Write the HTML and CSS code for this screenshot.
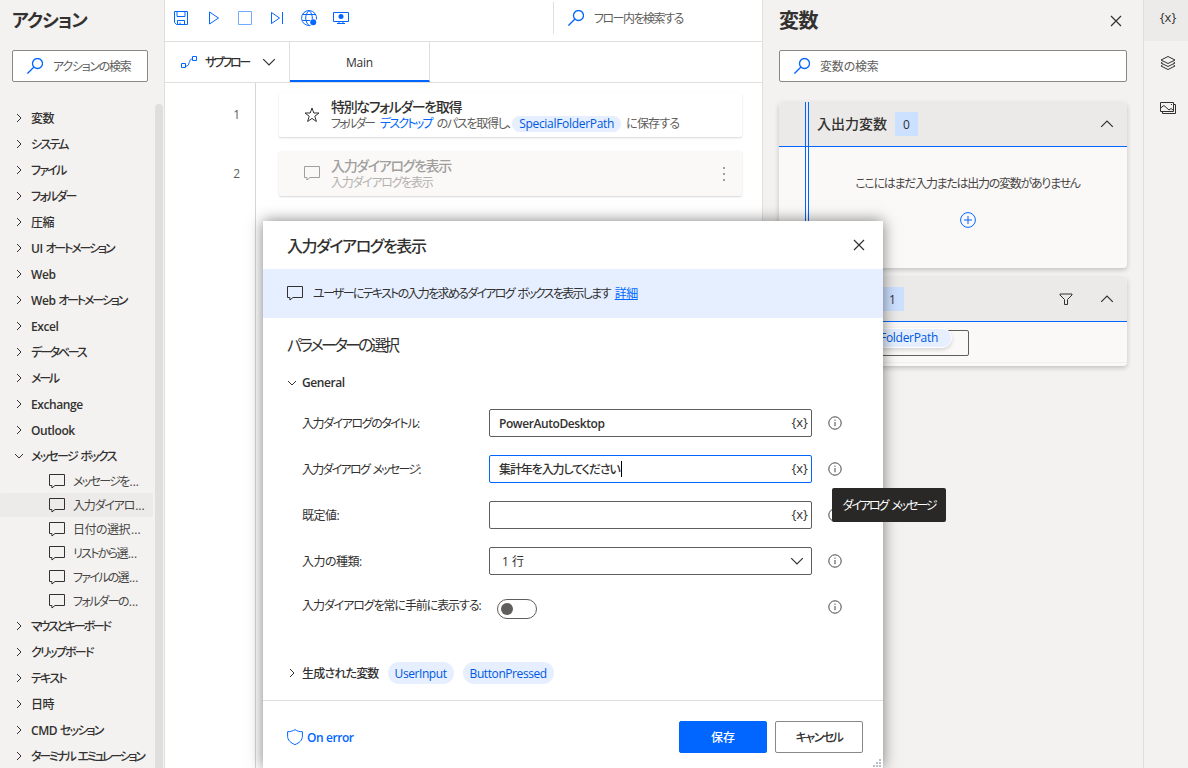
FILE: index.html
```html
<!DOCTYPE html>
<html lang="ja">
<head>
    <meta charset="UTF-8">
    <title>Power Automate Desktop</title>
    <link rel="stylesheet" href="styles.css">
</head>
<body>
    <svg class="defs">
        <symbol id="right" viewBox="0 0 8 10"><path d="M2 1l4 4-4 4"/></symbol>
        <symbol id="down" viewBox="0 0 10 8"><path d="M1 2l4 4 4-4"/></symbol>
        <symbol id="bigdown" viewBox="0 0 14 8"><path d="M1.2 1.2L7 7l5.8-5.8"/></symbol>
        <symbol id="bigup" viewBox="0 0 14 8"><path d="M1.2 6.8L7 1l5.8 5.8"/></symbol>
        <symbol id="search" viewBox="0 0 16 16"><circle cx="10.5" cy="5.5" r="5"/><path d="M7 9L.4 15.6"/></symbol>
        <symbol id="comment" viewBox="0 0 16 15"><path d="M.5.5h15v11H6L2.9 14v-2.500H.5z"/></symbol>
        <symbol id="close" viewBox="0 0 12 12"><path d="M1 1l10 10M11 1L1 11"/></symbol>
        <symbol id="info" viewBox="0 0 14 14"><circle cx="7" cy="7" r="6.2"/><path d="M7 6v4.200M7 3.600v1.200"/></symbol>
    </svg>

    <div class="app">
        <aside class="actions">
            <h2>アクション</h2>
            <div class="searchbox"><svg class="ic-search"><use href="#search"/></svg><span>アクションの検索</span></div>
            <div class="tree">
                <ul>
                    <li><svg class="arr"><use href="#right"/></svg><span class="kj">変数</span></li>
                    <li><svg class="arr"><use href="#right"/></svg><span>システム</span></li>
                    <li><svg class="arr"><use href="#right"/></svg><span>ファイル</span></li>
                    <li><svg class="arr"><use href="#right"/></svg><span>フォルダー</span></li>
                    <li><svg class="arr"><use href="#right"/></svg><span class="kj">圧縮</span></li>
                    <li><svg class="arr"><use href="#right"/></svg><span class="mix"><b class="en">UI </b>オートメーション</span></li>
                    <li><svg class="arr"><use href="#right"/></svg><span class="en">Web</span></li>
                    <li><svg class="arr"><use href="#right"/></svg><span class="mix"><b class="en">Web </b>オートメーション</span></li>
                    <li><svg class="arr"><use href="#right"/></svg><span class="en">Excel</span></li>
                    <li><svg class="arr"><use href="#right"/></svg><span class="tight">データベース</span></li>
                    <li><svg class="arr"><use href="#right"/></svg><span class="tight">メール</span></li>
                    <li><svg class="arr"><use href="#right"/></svg><span class="en">Exchange</span></li>
                    <li><svg class="arr"><use href="#right"/></svg><span class="en">Outlook</span></li>
                    <li><svg class="arr open"><use href="#down"/></svg><span>メッセージ ボックス</span></li>
                    <li class="sub"><svg class="cmt"><use href="#comment"/></svg><span>メッセージを<b>...</b></span></li>
                    <li class="sub on"><svg class="cmt"><use href="#comment"/></svg><span class="wide">入力ダイアロ<b>...</b></span></li>
                    <li class="sub"><svg class="cmt"><use href="#comment"/></svg><span class="kj">日付の選択<b>...</b></span></li>
                    <li class="sub"><svg class="cmt"><use href="#comment"/></svg><span>リストから選<b>...</b></span></li>
                    <li class="sub"><svg class="cmt"><use href="#comment"/></svg><span>ファイルの選<b>...</b></span></li>
                    <li class="sub"><svg class="cmt"><use href="#comment"/></svg><span>フォルダーの<b>...</b></span></li>
                    <li><svg class="arr"><use href="#right"/></svg><span class="tight">マウスとキーボード</span></li>
                    <li><svg class="arr"><use href="#right"/></svg><span>クリップボード</span></li>
                    <li><svg class="arr"><use href="#right"/></svg><span>テキスト</span></li>
                    <li><svg class="arr"><use href="#right"/></svg><span class="kj">日時</span></li>
                    <li><svg class="arr"><use href="#right"/></svg><span><b class="en">CMD </b>セッション</span></li>
                    <li><svg class="arr"><use href="#right"/></svg><span class="tight">ターミナル エミュレーション</span></li>
                </ul>
                <div class="scrollbar"></div>
            </div>
        </aside>

        <main class="flow">
            <div class="toolbar">
                <svg class="tb" viewBox="0 0 16 16"><path d="M1.500 1.500h13v13h-11l-2-2zM4 1.500v5h8v-5M4.500 14.500v-4h7v4M7 14.500v-2"/></svg>
                <svg class="tb" viewBox="0 0 16 16"><path d="M4.500 2l9 6-9 6z"/></svg>
                <svg class="tb dim" viewBox="0 0 16 16"><path d="M1.500 1.500h13v13h-13z"/></svg>
                <svg class="tb" viewBox="0 0 16 16"><path d="M2.500 2.500l8 5.500-8 5.500zM13.500 2v12"/></svg>
                <svg class="tb" viewBox="0 0 16 16"><path d="M9.500 15.400A7.500 7.500 0 1 1 15.400 9.500M8 .5C3.600 4.500 3.600 11.500 8 15.500M8 .5c2.600 2.300 3.600 5.500 3.300 8.700M1.400 4.500h13.200M1.400 10.500H9"/><circle class="fill" cx="12.200" cy="12.200" r="3"/></svg>
                <svg class="tb" viewBox="0 0 16 16"><path d="M.5 2.500h15v9H.5zM6 11.500v2.500M10 11.500v2.500M4 13.500h8"/><circle class="fill" cx="8" cy="6.500" r="2.500"/></svg>
                <div class="flowsearch"><svg class="ic-search"><use href="#search"/></svg><span>フロー内を検索する</span></div>
            </div>
            <div class="tabs">
                <div class="subflow">
                    <svg class="ic-flow" viewBox="0 0 16 13"><path d="M.5 7.500h4v4h-4zM11.500.5h4v4h-4zM4.500 10h1.500c2 0 2.500-7 4.500-7h1"/></svg>
                    <span>サブフロー</span>
                    <svg class="ic-chev"><use href="#bigdown"/></svg>
                </div>
                <div class="tab">Main</div>
            </div>
            <div class="canvas">
                <div class="gutter"><div>1</div><div>2</div></div>
                <div class="steps">
                    <div class="step">
                        <svg class="ic-star" viewBox="0 0 16 16"><path d="M8 1l1.800 5h5.200l-4.200 3.200 1.600 5.300L8 11.400l-4.400 3.100 1.600-5.300L1 6h5.200z"/></svg>
                        <div class="body">
                            <div class="name">特別なフォルダーを取得</div>
                            <div class="desc"><span class="kana">フォルダー</span><a>デスクトップ</a><span>のパスを取得し、</span><b class="chip">SpecialFolderPath</b><span class="kj">に保存する</span></div>
                        </div>
                    </div>
                    <div class="step off">
                        <svg class="cmt"><use href="#comment"/></svg>
                        <div class="body">
                            <div class="name">入力ダイアログを表示</div>
                            <div class="desc">入力ダイアログを表示</div>
                        </div>
                        <div class="dots"><i></i><i></i><i></i></div>
                    </div>
                </div>
            </div>
        </main>

        <section class="vars">
            <div class="head"><h2>変数</h2><svg class="ic-close"><use href="#close"/></svg></div>
            <div class="searchbox"><svg class="ic-search"><use href="#search"/></svg><span class="kj">変数の検索</span></div>
            <div class="group io">
                <div class="ghead"><span class="gname">入出力変数</span><span class="count">0</span><svg class="ic-chev last"><use href="#bigup"/></svg></div>
                <div class="gbody">
                    <p>ここにはまだ入力または出力の変数がありません</p>
                    <svg class="ic-plus" viewBox="0 0 16 16"><circle cx="8" cy="8" r="7.400"/><path d="M8 4v8M4 8h8"/></svg>
                </div>
                <div class="marker"></div>
            </div>
            <div class="group fl">
                <div class="ghead"><span class="gname">フロー変数</span><span class="count">1</span>
                    <svg class="ic-filter last" viewBox="0 0 14 12"><path d="M1 1h12v1L8.500 6.500v5h-3v-5L1 2z"/></svg>
                    <svg class="ic-chev"><use href="#bigup"/></svg>
                </div>
                <div class="gbody"><div class="edit"><b class="chip">SpecialFolderPath</b></div></div>
            </div>
        </section>

        <nav class="rail">
            <div class="item on">{x}</div>
            <div class="item"><svg viewBox="0 0 16 16"><path d="M8 1.500l7 3.500-7 3.500L1 5zM2.500 7L1 8l7 3.500L15 8l-1.500-1M2.500 10L1 11l7 3.500 7-3.500-1.500-1"/></svg></div>
            <div class="item"><svg viewBox="0 0 16 16"><path d="M.5 2.500h13v9H.5zM13.500 4.500h2v9h-13v-2M.5 8L4 5.500l5 4.500 2-1.500 2.500 2M11 4.500h1"/></svg></div>
        </nav>
    </div>

    <div class="dialog">
        <header><h3>入力ダイアログを表示</h3><svg class="ic-close"><use href="#close"/></svg></header>
        <div class="notice"><svg class="cmt"><use href="#comment"/></svg><span>ユーザーにテキストの入力を求めるダイアログ ボックスを表示します</span><a>詳細</a></div>
        <div class="params">
            <h4>パラメーターの選択</h4>
            <div class="section"><svg class="arr open"><use href="#down"/></svg><b class="en">General</b></div>
            <div class="row"><label>入力ダイアログのタイトル:</label><div class="input"><span class="en">PowerAutoDesktop</span><i>{x}</i></div><svg class="ic-info"><use href="#info"/></svg></div>
            <div class="row"><label class="tight">入力ダイアログ メッセージ:</label><div class="input focus"><span>集計年を入力してください</span><em></em><i>{x}</i></div><svg class="ic-info"><use href="#info"/></svg></div>
            <div class="row"><label class="kj">既定値:</label><div class="input"><i>{x}</i></div><svg class="ic-info"><use href="#info"/></svg></div>
            <div class="row"><label class="kj">入力の種類:</label><div class="input select"><span>1 行</span><svg class="ic-chev"><use href="#bigdown"/></svg></div><svg class="ic-info"><use href="#info"/></svg></div>
            <div class="row top"><label class="mid">入力ダイアログを常に手前に表示する:</label><div class="toggle"></div><svg class="ic-info"><use href="#info"/></svg></div>
            <div class="section gen"><svg class="arr"><use href="#right"/></svg><b class="label">生成された変数</b><b class="chip">UserInput</b><b class="chip">ButtonPressed</b></div>
        </div>
        <footer>
            <svg class="ic-shield" viewBox="0 0 16 16"><path d="M8 .6C6 2.100 3.500 2.700.6 2.700v4.500c0 4 3 6.600 7.400 8.400 4.400-1.800 7.400-4.400 7.400-8.400V2.700C12.500 2.700 10 2.100 8 .6z"/></svg>
            <span class="onerror en">On error</span>
            <button class="primary">保存</button>
            <button>キャンセル</button>
            <svg class="grip" viewBox="0 0 9 9"><path d="M6 0h2v2H6zM6 3h2v2H6zM3 3h2v2H3zM6 6h2v2H6zM3 6h2v2H3zM0 6h2v2H0z"/></svg>
        </footer>
        <div class="tooltip"><span>ダイアログ メッセージ</span></div>
    </div>
</body>
</html>
```
FILE: styles.css
```css
* { box-sizing: border-box; margin: 0; padding: 0; }
html, body { height: 768px; overflow: hidden; }
body {
    font: 12px/16px "Open Sans", "Noto Sans CJK JP", sans-serif;
    font-feature-settings: "palt";
    color: #323130;
    background: #fff;
    white-space: nowrap;
}
ul { list-style: none; }
svg { fill: none; stroke: #323130; stroke-width: 1; flex: none; display: block; }
.defs { position: absolute; width: 0; height: 0; }
span, label, b, i, a { flex: none; }
i, em { font-style: normal; }
a { color: #0066ff; }

.arr { width: 8px; height: 10px; }
.arr.open { width: 10px; height: 8px; }
.cmt { width: 16px; height: 15px; }
.ic-search { width: 16px; height: 16px; stroke: #0066ff; stroke-width: 1.3; }
.ic-chev { width: 14px; height: 8px; stroke-width: 1.2; }
.ic-close { width: 12px; height: 12px; stroke-width: 1.2; }
.chip {
    height: 16px;
    padding: 0 7px;
    border-radius: 11px;
    font-weight: 400;
    letter-spacing: -.3px;
    color: #0058e0;
    background: #e5efff;
}

.app { display: flex; height: 768px; }

/* actions */
.actions { width: 165px; background: #f3f2f1; border-right: 1px solid #e1dfdd; display: flex; flex-direction: column; flex: none; }
h2 { font-size: 18px; line-height: 24px; font-weight: 600; }
.actions h2 { padding: 8px 12px 0; letter-spacing: -1px; }
.searchbox {
    height: 32px;
    border: 1px solid #8a8886;
    border-radius: 2px;
    background: #fff;
    display: flex;
    align-items: center;
    gap: 10px;
    padding-left: 14px;
    color: #605e5c;
}
.searchbox span, .flowsearch span { padding-top: 2px; letter-spacing: -1.25px; }
.searchbox .kj { letter-spacing: -.2px; }
.actions .searchbox { margin: 18px 16px 0 12px; }
.tree { display: flex; margin-top: 22px; height: 664px; overflow: hidden; }
.tree ul { width: 153px; padding-top: 1px; flex: none; }
.tree li { height: 26px; display: flex; align-items: center; padding-left: 15px; font-weight: 500; letter-spacing: -1.75px; word-spacing: 2px; }
.tree li span { padding-top: 2px; }
.tree li .arr { margin-right: 8px; }
.tree li .arr.open { margin: 0 7px 0 -1px; }
.tree li.sub { height: 24px; padding-left: 49px; font-weight: 400; color: #484644; border-radius: 2px; letter-spacing: -1.7px; }
.tree li.sub b { font-weight: 400; letter-spacing: 0; margin-left: 1px; }
.tree li.sub .wide { letter-spacing: -1.2px; }
.tree li.on { background: #edebe9; }
.tree .cmt { margin-right: 8px; }
.tree .mix { letter-spacing: -2.1px; }
.tree .tight { letter-spacing: -2.25px; }
.tree .kj { letter-spacing: -.5px; }
.en, .tree .en { font-weight: 600; letter-spacing: -.42px; word-spacing: 0; }
.scrollbar { width: 8px; margin-left: 2px; background: #e1dfdd; border-radius: 4px 4px 0 0; }

/* flow */
.flow { width: 597px; flex: none; display: flex; flex-direction: column; }
.toolbar { height: 42px; border-bottom: 1px solid #e1dfdd; display: flex; align-items: center; padding: 0 0 5px 8px; gap: 16px; }
.tb { width: 16px; height: 16px; stroke: #0066ff; }
.dim { opacity: .55; }
.fill { fill: #0066ff; stroke: none; }
.flowsearch { height: 32px; border-left: 1px solid #e1dfdd; margin-left: 188px; padding-left: 14px; display: flex; align-items: center; gap: 10px; color: #605e5c; }
.flowsearch span { letter-spacing: -1.5px; }
.tabs { height: 41px; border-bottom: 1px solid #e1dfdd; display: flex; }
.subflow { width: 125px; border-right: 1px solid #e1dfdd; display: flex; align-items: center; padding-left: 16px; font-weight: 500; letter-spacing: -2.3px; }
.subflow span { padding-top: 2px; }
.ic-flow { width: 16px; height: 13px; stroke: #0066ff; margin-right: 8px; }
.subflow .ic-chev { margin-left: auto; margin-right: 13px; }
.tab { width: 140px; height: 40px; border-right: 1px solid #e1dfdd; border-bottom: 2px solid #0066ff; text-align: center; line-height: 42px; letter-spacing: -.2px; }
.canvas { flex: 1; display: flex; }
.gutter { width: 91px; border-right: 1px solid #d8d6d4; text-align: right; padding: 2px 15px 0 0; color: #605e5c; line-height: 59px; }
.steps { padding: 10px 0 0 23px; display: flex; flex-direction: column; gap: 14px; }
.step { width: 463px; height: 44px; padding-left: 25px; display: flex; align-items: center; box-shadow: 0 1px 2px rgba(0, 0, 0, .16); border-radius: 2px; }
.step.off { height: 45px; background: #faf9f8; color: #a19f9d; }
.step.off .cmt { stroke: #a19f9d; }
.ic-star { width: 16px; height: 16px; }
.step .body { margin-left: 11px; }
.name { font-size: 14px; line-height: 18px; font-weight: 500; letter-spacing: -1.35px; }
.desc { display: flex; height: 16px; letter-spacing: -1.3px; color: #605e5c; }
.off .desc { color: #b3b0ad; }
.desc .kana { letter-spacing: -2.1px; }
.desc a { margin: 0 5px 0 6px; letter-spacing: -1.8px; }
.desc span + .chip { margin: 0 5px 0 1px; }
.desc .kj { letter-spacing: -.8px; }
.dots { margin-left: auto; margin-right: 17px; display: flex; flex-direction: column; gap: 4px; }
.dots i { width: 2px; height: 2px; background: #a19f9d; }

/* variables */
.vars { width: 381px; flex: none; background: #f3f2f1; border-left: 1px solid #e1dfdd; padding: 0 16px; }
.head { display: flex; align-items: center; height: 42px; justify-content: space-between; padding-right: 5px; }
.head h2 { font-size: 20px; letter-spacing: -.5px; }
.vars .searchbox { margin-top: 8px; }
.group { background: #faf9f8; border-radius: 4px; box-shadow: 0 2px 5px rgba(0, 0, 0, .2); }
.io { height: 166px; margin-top: 20px; position: relative; }
.fl { height: 89px; margin-top: 9px; }
.ghead { height: 45px; background: #ebeae8; border-bottom: 1px solid #0066ff; border-radius: 4px 4px 0 0; display: flex; align-items: center; padding: 0 13px 0 38px; }
.gname { font-size: 14px; font-weight: 500; letter-spacing: 0; width: 78px; }
.fl .gname { width: 64px; }
.count { width: 23px; height: 24px; background: #cce0ff; text-align: center; line-height: 25px; }
.last { margin-left: auto; }
.ic-filter { width: 14px; height: 12px; }
.ic-filter + .ic-chev { margin-left: 27px; }
.io .gbody { display: flex; flex-direction: column; align-items: center; padding: 29px 0 0 29px; gap: 20px; color: #484644; letter-spacing: -1.28px; }
.ic-plus { width: 16px; height: 16px; stroke: #0066ff; }
.marker { position: absolute; left: 26px; top: 0; width: 4px; height: 160px; border: solid #0066ff; border-width: 0 1px; }
.fl .gbody { padding: 8px 0 0 39px; height: 41px; border-bottom: 1px solid #f0efee; }
.edit { width: 151px; height: 26px; border: 1px solid #605e5c; border-radius: 2px; display: flex; justify-content: flex-end; padding-right: 16px; }
.edit .chip { height: 20px; margin-top: -3px; line-height: 18px; padding: 0 13px; border: 1px solid #fff; box-shadow: 0 2px 4px rgba(0, 0, 0, .15); }

.rail { flex: 1; background: #f3f2f1; border-left: 1px solid #e1dfdd; }
.rail .item { height: 41px; margin-bottom: 4px; display: flex; align-items: center; justify-content: center; padding: 0 0 5px 4px; font-size: 13px; }
.rail .item.on { background: #edebe9; padding-bottom: 8px; }
.rail svg { width: 16px; height: 16px; }

/* dialog window */
.dialog {
    position: absolute;
    left: 263px;
    top: 221px;
    width: 620px;
    height: 547px;
    background: #fff;
    box-shadow: 0 0 14px rgba(0, 0, 0, .5);
}
.dialog header { height: 48px; display: flex; align-items: center; justify-content: space-between; padding: 0 18px 0 24px; }
h3 { font-size: 16px; font-weight: 500; letter-spacing: -1.4px; padding-top: 1px; }
.notice { height: 49px; background: #e5efff; display: flex; align-items: center; padding-left: 24px; }
.notice span { margin: 1px 5px 0 10px; letter-spacing: -1.7px; word-spacing: 2px; }
.notice a { margin-top: 1px; text-decoration: underline; letter-spacing: -.5px; }
.params { height: 382px; padding: 16px 24px 0; }
h4 { font-size: 16px; line-height: 22px; font-weight: 400; letter-spacing: -2.8px; }
.section { display: flex; align-items: center; height: 22px; margin-top: 16px; }
.section b { margin-left: 5px; }
.row { display: flex; align-items: center; height: 28px; margin: 15px 0 18px; }
.row + .row { margin-top: 0; }
.row label { width: 187px; padding: 2px 0 0 15px; letter-spacing: -1.45px; }
.row label.tight { letter-spacing: -1.75px; word-spacing: 2px; }
.row label.mid { letter-spacing: -1.1px; }
.row label.kj { letter-spacing: -.5px; }
.input { width: 323px; height: 28px; border: 1px solid #605e5c; border-radius: 2px; display: flex; align-items: center; padding: 0 3px 0 9px; font-weight: 500; }
.input span { padding-top: 2px; }
.input i { margin: -2px 0 0 auto; font-weight: 400; font-size: 13px; }
.focus { border-color: #0066ff; }
.focus span { letter-spacing: -1.1px; }
.focus em { width: 1px; height: 16px; background: #000; margin-left: 1px; }
.select { padding: 0 7px 0 12px; font-weight: 400; }
.select .ic-chev { margin-left: auto; }
.row label + div { margin-left: 15px; }
.ic-info { width: 14px; height: 14px; margin-left: 16px; stroke: #484644; }
.row.top label { padding: 0 0 2px 15px; }
.row label + .toggle { width: 40px; height: 20px; border: 1px solid #605e5c; border-radius: 10px; margin: 4px 275px 0 23px; display: flex; align-items: center; padding-left: 3px; }
.toggle::before { content: ""; width: 12px; height: 12px; border-radius: 6px; background: #605e5c; }
.gen { margin-top: 41px; }
.gen .arr { margin-left: 1px; }
.gen b.label { margin-left: 6px; padding-top: 2px; font-weight: 500; letter-spacing: -.8px; }
.gen .chip { margin-left: 9px; height: 22px; line-height: 23px; letter-spacing: -.42px; }
footer { height: 68px; border-top: 1px solid #e1dfdd; display: flex; align-items: center; padding: 4px 20px 0 24px; position: relative; }
.ic-shield { width: 16px; height: 16px; stroke: #0066ff; }
.onerror { color: #0066ff; margin: 0 auto 0 4px; padding-top: 2px; }
button { width: 88px; height: 32px; padding-top: 2px; border: 1px solid #8a8886; border-radius: 2px; background: #fff; font: inherit; font-weight: 500; font-feature-settings: "palt"; color: #323130; letter-spacing: -1.5px; }
button.primary { background: #0066ff; border-color: #0066ff; color: #fff; margin-right: 8px; letter-spacing: 0; }
.grip { position: absolute; right: 1px; bottom: 0; width: 9px; height: 9px; fill: #b8bfc9; stroke: none; }
.tooltip { position: absolute; left: 569px; top: 267px; width: 114px; height: 34px; border-radius: 2px; background: #292827; color: #fff; display: flex; align-items: center; justify-content: center; letter-spacing: -2.1px; word-spacing: 3px; }
.tooltip span { padding-top: 2px; }
```
